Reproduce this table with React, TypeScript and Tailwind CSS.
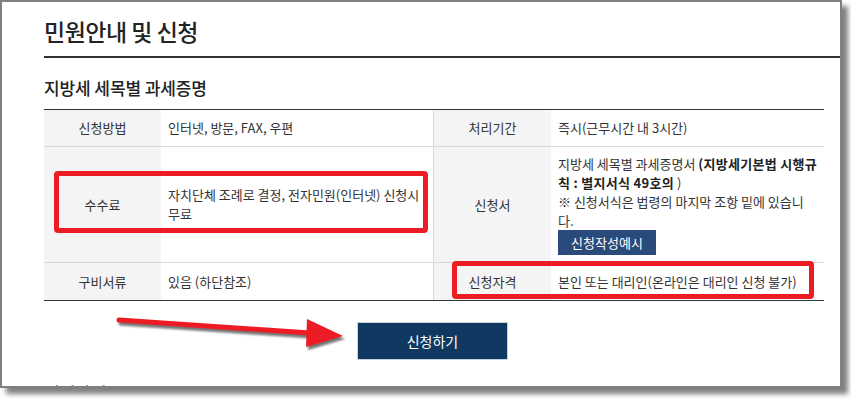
import React from 'react';

const font = { fontFamily: '"Noto Sans CJK KR", "Noto Sans", sans-serif' };

const Label: React.FC<{ children: React.ReactNode; className?: string }> = ({ children, className = '' }) => (
  <div className={`bg-[#f4f4f4] flex items-center justify-center text-[#333] ${className}`}>{children}</div>
);

const Value: React.FC<{ children: React.ReactNode; className?: string }> = ({ children, className = '' }) => (
  <div className={`flex flex-col justify-center pl-[7px] pr-2 text-[#333] ${className}`}>{children}</div>
);

export default function App() {
  return (
    <div className="w-[851px] h-[399px] bg-white overflow-hidden" style={font}>
      <div className="relative w-[842px] h-[388px] border-2 border-[#7f7f7f] bg-white overflow-hidden shadow-[6px_6px_5px_rgba(0,0,0,0.5)] pl-[42px] flex flex-col">
        {/* page title */}
        <div className="h-[56px] shrink-0 border-b-2 border-[#333] flex items-center pt-1">
          <h1 className="text-[23px] font-medium tracking-[-0.5px] text-[#222] leading-none">민원안내 및 신청</h1>
        </div>

        {/* section title */}
        <div className="h-[51px] shrink-0 pt-[19px]">
          <h2 className="text-[17px] font-medium tracking-[-0.1px] text-[#222] leading-[21px]">지방세 세목별 과세증명</h2>
        </div>

        {/* info table */}
        <div className="w-[780px] shrink-0 border-t border-[#333] border-b text-[13px] tracking-[0px] grid grid-cols-[117px_273px_117px_273px]">
          <Label className="h-[37px] border-b border-[#d9d9d9]">신청방법</Label>
          <Value className="border-b border-r border-[#d9d9d9]">인터넷, 방문, FAX, 우편</Value>
          <Label className="border-b border-[#d9d9d9]">처리기간</Label>
          <Value className="border-b border-[#d9d9d9]">즉시(근무시간 내 3시간)</Value>

          <Label className="border-b border-[#d9d9d9]">수수료</Label>
          <Value className="border-b border-r border-[#d9d9d9] leading-[19px] pb-[2px]">
            <span className="whitespace-nowrap">자치단체 조례로 결정, 전자민원(인터넷) 신청시</span>
            <span>무료</span>
          </Value>
          <Label className="border-b border-[#d9d9d9]">신청서</Label>
          <div className="border-b border-[#d9d9d9] pl-[7px] pt-[7px] pb-[7px] leading-[19px] text-[#333] flex flex-col items-start">
            <span className="whitespace-nowrap">
              지방세 세목별 과세증명서 <b className="font-bold text-[#222] tracking-[0.3px]">(지방세기본법 시행규</b>
            </span>
            <span className="whitespace-nowrap">
              <b className="font-bold text-[#222] tracking-[0.3px]">칙 : 별지서식 49호의</b> )
            </span>
            <span className="whitespace-nowrap">※ 신청서식은 법령의 마지막 조항 밑에 있습니</span>
            <span>다.</span>
            <button className="w-[98px] h-[25px] bg-[#2a4a7c] text-white text-[13px] flex items-center justify-center">
              신청작성예시
            </button>
          </div>

          <Label className="h-[37px]">구비서류</Label>
          <Value className="border-r border-[#d9d9d9]">있음 (하단참조)</Value>
          <Label>신청자격</Label>
          <Value>본인 또는 대리인(온라인은 대리인 신청 불가)</Value>
        </div>

        {/* apply button */}
        <div className="w-[780px] flex justify-center mt-[21px] pr-[3px]">
          <button className="w-[151px] h-[38px] bg-[#0f3961] border border-[#c9d2dc] text-white text-[14px]">
            신청하기
          </button>
        </div>

        {/* next section, cut off by the frame */}
        <div className="mt-[22px] text-[17px] font-medium text-[#222] leading-[21px]">서식파일</div>

        {/* red highlight boxes */}
        <div className="absolute left-[52px] top-[169px] w-[374px] h-[62px] border-[5px] border-[#ed1c24] rounded-[4px]" />
        <div className="absolute left-[450px] top-[259px] w-[362px] h-[38px] border-[5px] border-[#ed1c24] rounded-[4px]" />

        {/* red arrow */}
        <svg
          className="absolute left-[108px] top-[312px] drop-shadow-[2px_3px_1px_rgba(0,0,0,0.55)]"
          width="240"
          height="40"
          viewBox="0 0 240 40"
        >
          <line x1="9" y1="6" x2="200" y2="19" stroke="#ed1c24" strokeWidth="5" strokeLinecap="round" />
          <polygon points="197,5 233,22 196,33" fill="#ed1c24" />
        </svg>
      </div>
    </div>
  );
}
